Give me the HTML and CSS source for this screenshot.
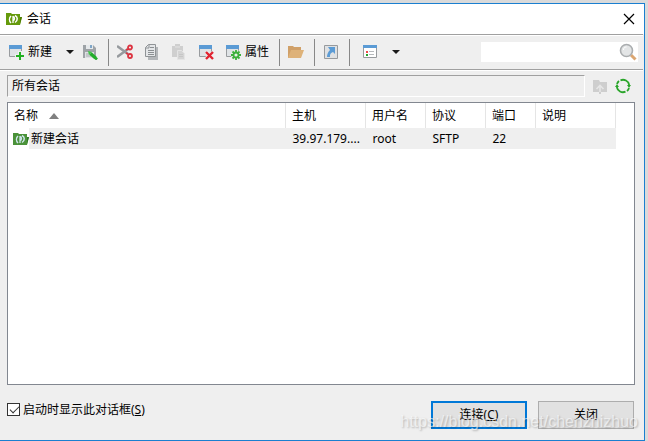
FILE: index.html
```html
<!DOCTYPE html>
<html lang="zh-CN">
<head>
    <meta charset="UTF-8">
    <meta name="viewport" content="width=device-width, initial-scale=1.0">
    <title>会话</title>
    <link rel="stylesheet" href="styles.css">
</head>
<body>

    <div class="dialog">
        <div class="titlebar">
            <svg class="icon" viewBox="0 0 16 16">
                <path d="M0 2h5l1 1h8v3h2l-2 8H0z" fill="#659a0c"/>
                <path d="M14 6h2l-2 7z" fill="#4d7d00"/>
                <path d="M5 5C3 7 3 10 5 12" fill="none" stroke="#fff" stroke-width="1.500"/>
                <path d="M7 12V5M7 5.500c2 0 2 4 0 4" fill="none" stroke="#fff" stroke-width="1.300"/>
                <path d="M9 4.500c3 1.500 3 5 0 7" fill="none" stroke="#fff" stroke-width="1.500"/>
            </svg>
            <span class="title">会话</span>
            <button class="close" aria-label="关闭窗口">
                <svg width="12" height="12" viewBox="0 0 12 12"><path d="M1 1l10 10M11 1L1 11" stroke="#000" stroke-width="1.2"/></svg>
            </button>
        </div>

        <div class="toolbar">
            <div class="group">
                <button class="tool">
                    <svg class="icon" viewBox="0 0 16 16">
                        <path d="M1.500 1.500h12v11h-12z" fill="#dfe3e6" stroke="#989b9e"/>
                        <path d="M1 1h13v4H1z" fill="#5b9bd5"/>
                        <path d="M12 7v9M7 12h9" stroke="#efefef" stroke-width="4"/>
                        <path d="M12 8v8M8 12h8" stroke="#22b022" stroke-width="2"/>
                    </svg>
                    新建
                </button>
                <button class="drop" aria-label="新建选项"><svg width="10" height="6" viewBox="0 0 10 6"><path d="M1 1h8L5 5z" fill="#1a1a1a"/></svg></button>
                <button class="tool save" aria-label="另存为">
                    <svg class="icon" viewBox="0 0 16 16">
                        <path d="M1 1h10l3 3v10H1z" fill="#9ea3a7"/>
                        <path d="M4 1h7v4H4z" fill="#e6e9eb"/>
                        <path d="M8 1h2v3H8z" fill="#7fa6c8"/>
                        <path d="M3 8h9v6H3z" fill="#dde0e3"/>
                        <path d="M4 10h5M4 12h5" stroke="#a9adb0"/>
                        <path d="M8.500 9.500l5 4.500" stroke="#23ad2b" stroke-width="3.400"/>
                        <path d="M6 7l4 1-3 3z" fill="#3fc545"/>
                        <path d="M13 13.500l2 2" stroke="#23ad2b" stroke-width="2.600"/>
                    </svg>
                </button>
            </div>
            <span class="sep"></span>
            <div class="group">
                <button class="tool" aria-label="剪切">
                    <svg class="icon" viewBox="0 0 16 16">
                        <path d="M0 2l11 8M0 13l11-8" stroke="#969a9e" stroke-width="2.600"/>
                        <circle cx="13" cy="3.500" r="2" fill="none" stroke="#dc3340" stroke-width="1.800"/>
                        <circle cx="13" cy="12" r="2" fill="none" stroke="#dc3340" stroke-width="1.800"/>
                        <path d="M9 6l2-1M9 9l2 1" stroke="#dc3340" stroke-width="1.500"/>
                    </svg>
                </button>
                <button class="tool" aria-label="复制">
                    <svg class="icon" viewBox="0 0 16 16">
                        <path d="M4 3h10v13H4z" fill="#b4b7ba"/>
                        <path d="M4.500.5h7v12h-10v-9z" fill="#e4e6e8" stroke="#8f9396"/>
                        <path d="M5 .5v3.500H1.500" fill="none" stroke="#8f9396"/>
                        <path d="M6 3.500h4M4 6.500h6M4 8.500h6M4 10.500h6" stroke="#8b8f92"/>
                    </svg>
                </button>
                <button class="tool" aria-label="粘贴">
                    <svg class="icon" viewBox="0 0 16 16">
                        <path d="M1 2h3V0h5v2h3v11H1z" fill="#cfcfcf"/>
                        <path d="M4 3h5" stroke="#e4e4e4"/>
                        <path d="M6.500 6.500h4l3 3v6h-7z" fill="#d4d4d4" stroke="#e4e4e4"/>
                        <path d="M8 10.500h4M8 12.500h4" stroke="#c6c6c6"/>
                    </svg>
                </button>
                <button class="tool" aria-label="删除">
                    <svg class="icon" viewBox="0 0 16 16">
                        <path d="M1.500 1.500h12v11h-12z" fill="#dfe3e6" stroke="#989b9e"/>
                        <path d="M1 1h13v4H1z" fill="#5b9bd5"/>
                        <path d="M8 8l8 7M16 8l-8 7" stroke="#efefef" stroke-width="4"/>
                        <path d="M8 8l7 7M15 8l-7 7" stroke="#e02330" stroke-width="2.400"/>
                    </svg>
                </button>
                <button class="tool">
                    <svg class="icon" viewBox="0 0 16 16">
                        <path d="M1.500 1.500h12v11h-12z" fill="#dfe3e6" stroke="#989b9e"/>
                        <path d="M1 1h13v4H1z" fill="#5b9bd5"/>
                        <circle cx="11" cy="11" r="5" fill="#efefef"/>
                        <path d="M11 6v10M6 11h10M7.500 7.500l7 7M14.500 7.500l-7 7" stroke="#3db03d" stroke-width="1.800"/>
                        <circle cx="11" cy="11" r="2.500" fill="#e8f2e8" stroke="#3db03d" stroke-width="1.800"/>
                    </svg>
                    属性
                </button>
            </div>
            <span class="sep"></span>
            <button class="tool" aria-label="打开文件夹">
                <svg class="icon" viewBox="0 0 16 16">
                    <path d="M0 2h5l1 1h7v11H0z" fill="#d0a068"/>
                    <path d="M3 6h13l-3 8H0z" fill="#deb279"/>
                </svg>
            </button>
            <span class="sep"></span>
            <button class="tool" aria-label="快捷方式">
                <svg class="icon" viewBox="0 0 16 16">
                    <path d="M1.500 1.500h13v13h-13z" fill="#dfe1e3" stroke="#979a9d"/>
                    <path d="M5 3h7v7l-2-2c-3 1-3 3-3 5H4c0-3 1-5 3-7z" fill="#5b9bd5"/>
                </svg>
            </button>
            <span class="sep"></span>
            <div class="group views">
                <button class="tool" aria-label="视图">
                    <svg class="icon" viewBox="0 0 16 16">
                        <path d="M1.500 1.500h13v12h-13z" fill="#fff" stroke="#979a9d"/>
                        <path d="M1 1h14v3H1z" fill="#5b9bd5"/>
                        <path d="M4 7h2v2H4z" fill="#f04a4a"/>
                        <path d="M4 10h2v2H4z" fill="#25a52b"/>
                        <path d="M7 7.500h5M7 10.500h5" stroke="#b6b9bc"/>
                    </svg>
                </button>
                <button class="drop" aria-label="视图选项"><svg width="10" height="6" viewBox="0 0 10 6"><path d="M1 1h8L5 5z" fill="#1a1a1a"/></svg></button>
            </div>
            <div class="search">
                <input type="text" aria-label="搜索">
                <svg width="18" height="18" viewBox="0 0 18 18">
                    <path d="M12 12l4.500 4.500" stroke="#dba671" stroke-width="3"/>
                    <circle cx="7.500" cy="7.500" r="6" fill="#e3e5e6" stroke="#aaadaf" stroke-width="1.600"/>
                    <path d="M4.500 7c0-2 1-3 3-3" fill="none" stroke="#fff"/>
                </svg>
            </div>
        </div>

        <div class="content">
            <div class="location">
                <div class="path">所有会话</div>
                <button class="tool" aria-label="上一级" disabled>
                    <svg class="icon" viewBox="0 0 16 16">
                        <path d="M1 2h6l1 2h7v10H1z" fill="#cecece"/>
                        <path d="M8 16V8M4.500 11L8 7.500l3.500 3.500" fill="none" stroke="#e6e6e6" stroke-width="1.600"/>
                        <path d="M8 14v2" stroke="#cecece" stroke-width="2"/>
                    </svg>
                </button>
                <button class="tool" aria-label="刷新">
                    <svg class="icon" viewBox="0 0 16 16">
                        <path d="M5.500 2.300A6.300 6.300 0 0 1 14.200 7M10.500 13.700A6.300 6.300 0 0 1 1.800 9M2 6a6.300 6.300 0 0 1 2-3M14 10a6.300 6.300 0 0 1-2 3" fill="none" stroke="#2aa52a" stroke-width="1.800"/>
                        <path d="M12 7h4l-2 3zM0 9h4L2 6z" fill="#2aa52a"/>
                    </svg>
                </button>
            </div>

            <div class="list">
                <table>
                    <thead>
                        <tr>
                            <th>名称 <svg class="sort" width="10" height="6" viewBox="0 0 10 6"><path d="M0 6l5-6 5 6z" fill="#808080"/></svg></th>
                            <th class="host">主机</th>
                            <th class="user">用户名</th>
                            <th class="user">协议</th>
                            <th class="port">端口</th>
                            <th class="host">说明</th>
                        </tr>
                    </thead>
                    <tbody>
                        <tr>
                            <td class="name">
                                <div class="session">
                                    <svg class="icon" viewBox="0 0 16 16">
                                        <path d="M0 2h5l1 1h8v3h2l-2 8H0z" fill="#4b9239"/>
                                        <path d="M14 6h2l-2 7z" fill="#2c7a25"/>
                                        <path d="M5 5C3 7 3 10 5 12" fill="none" stroke="#cfe5ee" stroke-width="1.500"/>
                                        <path d="M7 12V5M7 5.500c2 0 2 4 0 4" fill="none" stroke="#cfe5ee" stroke-width="1.300"/>
                                        <path d="M9 4.500c3 1.500 3 5 0 7" fill="none" stroke="#cfe5ee" stroke-width="1.500"/>
                                    </svg>
                                    <span>新建会话</span>
                                </div>
                            </td>
                            <td>39.97.179....</td>
                            <td>root</td>
                            <td>SFTP</td>
                            <td>22</td>
                            <td></td>
                        </tr>
                    </tbody>
                </table>
            </div>

            <div class="footer">
                <div class="startup">
                    <input type="checkbox" id="show-startup" checked>
                    <label for="show-startup">启动时显示此对话框(<u>S</u>)</label>
                </div>
                <button class="btn primary">连接(<u>C</u>)</button>
                <button class="btn">关闭</button>
            </div>
        </div>
    </div>

    <div class="watermark">https://blog.csdn.net/chenzhizhuo</div>

</body>
</html>
```

FILE: styles.css
```css
* {
    box-sizing: border-box;
}

body {
    margin: 0;
    height: 100vh;
    padding: 3px 3px 0 0;
    display: flex;
    background-color: #dadada;
    font: 12px/16px "Noto Sans", "Noto Sans CJK SC", sans-serif;
    color: #000;
    overflow: hidden;
}

button, input {
    font: inherit;
    color: inherit;
}

svg {
    display: block;
    flex: none;
}

.icon {
    width: 16px;
    height: 16px;
}

.dialog {
    flex: 1;
    display: flex;
    flex-direction: column;
    background-color: #efefef;
    border: 1px solid #1a7fd0;
    border-left: none;
}

.titlebar {
    display: flex;
    align-items: center;
    height: 30px;
    padding: 0 9px 0 6px;
    background-color: #fff;
}

.title {
    flex: 1;
    padding-left: 5px;
}

.close, .tool, .drop {
    display: flex;
    align-items: center;
    gap: 4px;
    padding: 0;
    border: none;
    background: none;
    white-space: nowrap;
}

/* toolbar */
.toolbar {
    display: flex;
    align-items: center;
    height: 36px;
    margin-right: 1px;
    padding: 0 5px 0 8px;
    border-top: 1px solid #a0a0a0;
    border-bottom: 1px solid #a0a0a0;
    box-shadow: inset 0 1px #fff, 0 1px #fff;
}

.group {
    display: flex;
    align-items: center;
    gap: 11px;
}

.drop {
    margin-left: 2px;
}

.save {
    margin-left: -4px;
}

.sep {
    width: 1px;
    height: 27px;
    margin: 0 8px 0 10px;
    background-color: #888;
}

.views {
    margin-left: 4px;
}

.search {
    display: flex;
    align-items: center;
    width: 157px;
    height: 20px;
    margin-left: auto;
    padding-right: 1px;
    background-color: #fff;
}

.search input {
    flex: 1;
    min-width: 0;
    height: 20px;
    padding: 0 4px;
    border: none;
    outline: none;
    background: none;
}

/* session list */
.content {
    flex: 1;
    display: flex;
    flex-direction: column;
    padding: 5px 9px 11px 7px;
}

.location {
    display: flex;
    align-items: center;
    gap: 7px;
    padding-right: 4px;
}

.path {
    flex: 1;
    height: 22px;
    padding: 2px 4px;
    border: 1px solid;
    border-color: #a0a0a0 #fff #fff #a0a0a0;
}

.list {
    flex: 1;
    margin: 5px 0 16px;
    padding-right: 18px;
    border: 1px solid #828790;
    background-color: #fff;
}

table {
    width: 100%;
    table-layout: fixed;
    border-collapse: collapse;
}

th {
    height: 25px;
    padding: 0 6px;
    border-right: 1px solid #e5e5e5;
    font-weight: normal;
    text-align: left;
}

td {
    height: 21px;
    padding: 0 0 0 7px;
    background-color: #efefef;
    white-space: nowrap;
}

.host {
    width: 80px;
}

.user {
    width: 60px;
}

.port {
    width: 50px;
}

.sort {
    display: inline-block;
    margin-left: 8px;
    vertical-align: 1px;
}

.name {
    padding: 0;
    background-color: #fff;
}

.session {
    display: flex;
    align-items: center;
    padding-left: 5px;
}

.session span {
    flex: 1;
    padding-left: 2px;
    line-height: 21px;
    background-color: #efefef;
}

/* footer */
.footer {
    display: flex;
    gap: 11px;
    padding-right: 1px;
}

.startup {
    display: flex;
    align-items: center;
    gap: 3px;
    height: 17px;
    margin-right: auto;
}

.startup input {
    appearance: none;
    width: 13px;
    height: 13px;
    margin: 0;
    border: 1px solid #333;
    background-color: #fff;
    position: relative;
}

.startup input:checked::after {
    content: "";
    position: absolute;
    left: 2px;
    top: 2px;
    width: 8px;
    height: 4px;
    border: solid #333;
    border-width: 0 0 1px 1px;
    transform: rotate(-45deg);
}

.btn {
    width: 96px;
    height: 28px;
    padding: 0;
    border: 1px solid #adadad;
    background-color: #e1e1e1;
}

.primary {
    border: 2px solid #0078d7;
}

.watermark {
    position: absolute;
    right: 10px;
    bottom: 10px;
    font: 16px/18px "Liberation Sans", Arial, sans-serif;
    color: rgba(255, 255, 255, 0.6);
    text-shadow: 1px 1px 2px rgba(0, 0, 0, 0.25);
    pointer-events: none;
}
```
